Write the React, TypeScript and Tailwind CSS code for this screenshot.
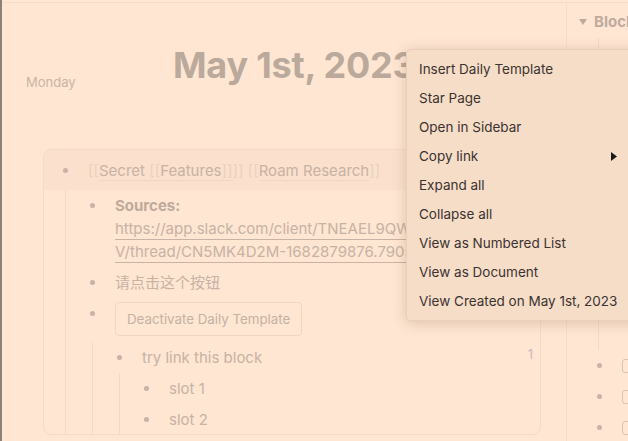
import React from 'react';

const font = { fontFamily: "Inter, 'Noto Sans CJK SC', sans-serif" };

const menuItems = [
  "Insert Daily Template",
  "Star Page",
  "Open in Sidebar",
  "Copy link",
  "Expand all",
  "Collapse all",
  "View as Numbered List",
  "View as Document",
  "View Created on May 1st, 2023",
];

function Dot() {
  return (
    <div className="w-[25px] h-[23px] flex items-center shrink-0">
      <span className="w-[5px] h-[5px] rounded-full bg-[#c8b3a6]" />
    </div>
  );
}

function Ref({ children }: { children: React.ReactNode }) {
  return (
    <>
      <span className="text-[#ecd0bc]">[[</span>
      <span className="border-b border-[#f0d6c2]">{children}</span>
      <span className="text-[#ecd0bc]">]]</span>
    </>
  );
}

function Children({ children }: { children: React.ReactNode }) {
  return <div className="ml-[2px] border-l border-[#f3d8c4] pl-[24px]">{children}</div>;
}

export default function App() {
  return (
    <div style={font} className="relative w-[628px] h-[441px] overflow-hidden bg-[#fee6d2] border-l-2 border-[#8f7f74]">
      <div className="h-[2px]" />
      <div className="flex h-full border-t border-[#f6dcc8]">
        {/* main page */}
        <div className="w-[565px] shrink-0 border-r border-[#f6dcc8]">
          <div className="grid grid-cols-[171px_1fr] pt-[42px]">
            <div className="pl-[24px] pt-[28px] text-[13px] leading-[18px] text-[#c9b5a7]">Monday</div>
            <h1 className="text-[36px] leading-[40px] font-bold text-[#bba99b] whitespace-nowrap tracking-[-0.2px]">
              May 1st, 2023
            </h1>
          </div>

          <div className="ml-[41px] mt-[58px] w-[498px] h-[286px] border border-[#f6d9c5] rounded-lg overflow-hidden text-[15px] leading-[23px] text-[#c7b2a4]">
            <div className="flex pl-[19px] pt-[9px] pb-[8px] bg-[#fbe1cd]">
              <Dot />
              <div className="whitespace-nowrap">
                <Ref>Secret <Ref>Features</Ref></Ref> <Ref>Roam Research</Ref>
              </div>
            </div>
            <div className="pl-[19px] pb-[6px]">
              <Children>
                <div className="flex py-[4px]">
                  <Dot />
                  <div className="whitespace-nowrap">
                    <div className="font-bold text-[#c0aa9c]">Sources:</div>
                    <div className="underline decoration-[#c9b3a5] underline-offset-[5px]">https://app.slack.com/client/TNEAEL9QWV</div>
                    <div className="underline decoration-[#c9b3a5] underline-offset-[5px]">V/thread/CN5MK4D2M-1682879876.790589</div>
                  </div>
                </div>
                <div className="flex py-[4px]">
                  <Dot />
                  <div>请点击这个按钮</div>
                </div>
                <div className="flex pt-[4px] pb-[6px]">
                  <Dot />
                  <button className="h-[34px] px-[11px] border border-[#f2d5c1] rounded text-[13.3px] text-[#c6b1a3]">
                    Deactivate Daily Template
                  </button>
                </div>
                <Children>
                  <div className="flex items-start py-[4px] pr-[7px]">
                    <Dot />
                    <div className="flex-1">try link this block</div>
                    <span className="text-[13px] leading-[16px] text-[#cdb6c4]">1</span>
                  </div>
                  <Children>
                    <div className="flex py-[4px]">
                      <Dot />
                      <div>slot 1</div>
                    </div>
                    <div className="flex py-[4px]">
                      <Dot />
                      <div>slot 2</div>
                    </div>
                  </Children>
                </Children>
              </Children>
            </div>
          </div>
        </div>

        {/* right sidebar */}
        <div className="flex-1 flex flex-col">
          <div className="pl-[12px] pt-[9px] flex items-center gap-[7px] h-[29px] whitespace-nowrap">
            <svg width="8" height="6" viewBox="0 0 8 6"><path d="M0 0h8L4 6z" fill="#bfab9e" /></svg>
            <span className="text-[15px] font-bold text-[#bfab9e]">Block References</span>
          </div>
          <div className="ml-[31px] mt-[6px] h-[312px] border-l border-[#f3d8c4]" />
          {[0, 1, 2].map(i => (
            <div key={i} className="h-[31px] flex items-center pl-[30px] gap-[20px]">
              <span className="w-[5px] h-[5px] rounded-full bg-[#c8b3a6] shrink-0" />
              <span className="w-[14px] h-[14px] border border-[#d9c3b4] rounded-[3px] shrink-0" />
            </div>
          ))}
        </div>
      </div>

      {/* context menu */}
      <div className="absolute left-[404px] top-[49px] w-[240px] pt-[5px] pb-[4px] bg-[#f6ddc8] border border-[#e9cfbb] rounded shadow-[0_2px_14px_rgba(110,70,40,0.22)]">
        {menuItems.map(item => (
          <div key={item} className="h-[29px] flex items-center pl-[12px] pr-[28px] text-[13.5px] text-[#3b3330] whitespace-nowrap">
            <span className="flex-1">{item}</span>
            {item === "Copy link" && (
              <svg width="6" height="9" viewBox="0 0 6 9"><path d="M0 0l6 4.5L0 9z" fill="#1e1a18" /></svg>
            )}
          </div>
        ))}
      </div>
    </div>
  );
}
